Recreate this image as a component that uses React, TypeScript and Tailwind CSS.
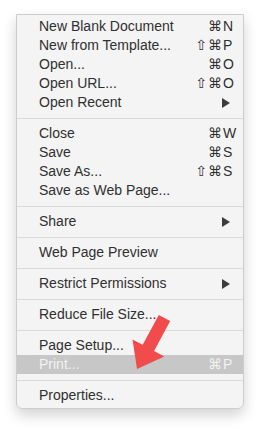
import React from "react";

type Item =
  | { type: "sep" }
  | { type: "item"; label: string; mods?: string; key?: string; sub?: boolean; hl?: boolean };

const SH = "\u21E7\uFE0E";
const CMD = "\u2318";

const items: Item[] = [
  { type: "item", label: "New Blank Document", mods: CMD, key: "N" },
  { type: "item", label: "New from Template...", mods: SH + CMD, key: "P" },
  { type: "item", label: "Open...", mods: CMD, key: "O" },
  { type: "item", label: "Open URL...", mods: SH + CMD, key: "O" },
  { type: "item", label: "Open Recent", sub: true },
  { type: "sep" },
  { type: "item", label: "Close", mods: CMD, key: "W" },
  { type: "item", label: "Save", mods: CMD, key: "S" },
  { type: "item", label: "Save As...", mods: SH + CMD, key: "S" },
  { type: "item", label: "Save as Web Page..." },
  { type: "sep" },
  { type: "item", label: "Share", sub: true },
  { type: "sep" },
  { type: "item", label: "Web Page Preview" },
  { type: "sep" },
  { type: "item", label: "Restrict Permissions", sub: true },
  { type: "sep" },
  { type: "item", label: "Reduce File Size..." },
  { type: "sep" },
  { type: "item", label: "Page Setup..." },
  { type: "item", label: "Print...", mods: CMD, key: "P", hl: true },
  { type: "sep" },
  { type: "item", label: "Properties..." },
];

function Row({ it }: { it: Extract<Item, { type: "item" }> }) {
  return (
    <div
      className={
        "h-[19px] flex items-center pl-[22px] " +
        (it.hl ? "bg-[#c7c7c7] text-[#f3f3f3]" : "text-[#303030]")
      }
    >
      <span className="flex-1 whitespace-nowrap">{it.label}</span>
      {it.key && (
        <div className="flex items-center">
          <span
            className="text-right whitespace-nowrap text-[14px] tracking-[1px]"
            style={{ fontFamily: '"DejaVu Sans", sans-serif' }}
          >
            {it.mods}
          </span>
          <span className="w-[15px] pr-[5px] box-content">{it.key}</span>
        </div>
      )}
      {it.sub && (
        <svg width="8" height="10" viewBox="0 0 8 10" className="mr-[13px]">
          <path d="M0 0 L8 5 L0 10 Z" fill="#3c3c3c" />
        </svg>
      )}
    </div>
  );
}

export default function App() {
  return (
    <div
      className="relative w-[260px] h-[430px] bg-white pt-[14px] pl-[16px] overflow-hidden"
      style={{ fontFamily: '"Liberation Sans", "DejaVu Sans", sans-serif' }}
    >
      <div className="w-[228px] bg-[#f4f4f4] border border-[#cdcdcd] rounded-b-[6px] pt-[2px] pb-[3px] text-[14px] shadow-[0_6px_14px_rgba(0,0,0,0.18)]">
        {items.map((it, i) =>
          it.type === "sep" ? (
            <div key={i} className="h-[12px] flex items-center">
              <div className="h-px w-full bg-[#dadada]" />
            </div>
          ) : (
            <Row key={i} it={it} />
          )
        )}
      </div>
      <svg
        className="absolute left-0 top-0"
        width="260"
        height="430"
        viewBox="0 0 260 430"
      >
        <polygon
          points="170.2,321.1 158.8,314.9 142.7,344.8 132.5,339.4 137,369 164.3,356.4 154.1,351"
          fill="#f24b4b"
        />
      </svg>
    </div>
  );
}
